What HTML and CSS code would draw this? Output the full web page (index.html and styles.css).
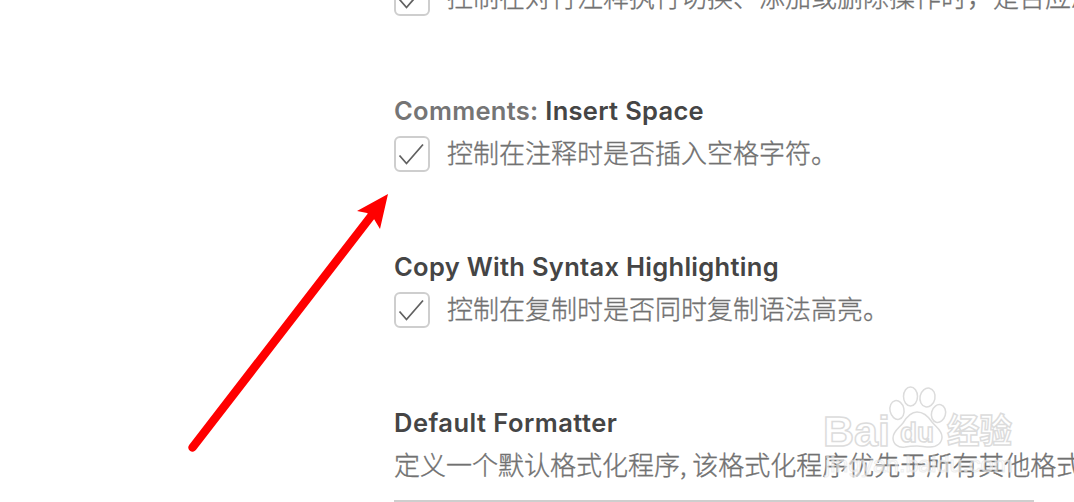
FILE: index.html
```html
<!DOCTYPE html>
<html lang="zh-CN">
<head>
<meta charset="utf-8">
<title>Settings</title>
<link rel="stylesheet" href="styles.css">
</head>
<body>
<main class="settings">
  <section class="item first">
    <div class="row">
      <span class="checkbox"><svg viewBox="0 0 32 32"><path d="M3.5 17.500 10.500 25.500 27 6.500"/></svg></span>
      <p class="desc">控制在对行注释执行切换、添加或删除操作时，是否应忽</p>
    </div>
  </section>
  <section class="item">
    <h2 class="title"><span class="category">Comments:</span> Insert Space</h2>
    <div class="row">
      <span class="checkbox"><svg viewBox="0 0 32 32"><path d="M3.5 17.500 10.500 25.500 27 6.500"/></svg></span>
      <p class="desc">控制在注释时是否插入空格字符。</p>
    </div>
  </section>
  <section class="item">
    <h2 class="title">Copy With Syntax Highlighting</h2>
    <div class="row">
      <span class="checkbox"><svg viewBox="0 0 32 32"><path d="M3.5 17.500 10.500 25.500 27 6.500"/></svg></span>
      <p class="desc">控制在复制时是否同时复制语法高亮。</p>
    </div>
  </section>
  <section class="item last">
    <h2 class="title formatter">Default Formatter</h2>
    <p class="desc wide">定义一个默认格式化程序, 该格式化程序优先于所有其他格式</p>
    <div class="select"></div>
  </section>
</main>
<svg class="arrow" viewBox="0 0 1074 502">
  <path class="shaft" d="M192.500 447.500 372 215"/>
  <path class="head" d="M388 194 357 211 367 213 374 219 380 229Z"/>
</svg>
<svg class="watermark" viewBox="814 380 260 122">
  <text class="url" x="825" y="472" textLength="188" lengthAdjust="spacingAndGlyphs">jingyan.baidu.com</text>
  <g class="outline">
    <ellipse cx="897" cy="410" rx="7" ry="9.500" transform="rotate(-12 897 410)"/>
    <ellipse cx="910.500" cy="396.500" rx="7" ry="9.500"/>
    <ellipse cx="927.500" cy="397.500" rx="7.500" ry="9.500" transform="rotate(12 927.500 397.500)"/>
    <ellipse cx="938.500" cy="413.500" rx="7" ry="9" transform="rotate(15 938.500 413.500)"/>
    <path d="M917 412c-7 0-11 6-14 11-4 5-10 8-10 15 0 6 5 10 12 9 5-1 8-1 12-1s8 1 13 1c7 0 12-4 12-10 0-7-6-10-10-15-4-6-8-10-15-10Z"/>
    <text class="logo" x="823" y="445.500" textLength="67" lengthAdjust="spacingAndGlyphs">Bai</text>
    <text class="du" x="900" y="442" textLength="34" lengthAdjust="spacingAndGlyphs">du</text>
    <text class="cjk" x="947" y="443" textLength="65" lengthAdjust="spacingAndGlyphs">经验</text>
  </g>
</svg>
</body>
</html>
```
FILE: styles.css
```css
body {
  margin: 0;
  width: 1074px;
  height: 502px;
  overflow: hidden;
  position: relative;
  background: #fff;
  font-family: Inter, "Noto Sans CJK SC", sans-serif;
}
.settings {
  display: flex;
  flex-direction: column;
  box-sizing: border-box;
  height: 502px;
  overflow: hidden;
  padding-left: 394px;
}
.item {
  height: 156px;
  flex: none;
}
.first { height: 92px; }
.first .row { margin-top: -20px; }
.last { height: 98px; }
.title {
  margin: 0 0 6px;
  font-size: 25.5px;
  line-height: 38px;
  font-weight: 600;
  letter-spacing: 0.3px;
  color: #454545;
  white-space: nowrap;
}
.formatter { letter-spacing: 0.46px; }
.category { color: #757575; }
.row {
  display: flex;
  align-items: center;
  gap: 17px;
  height: 36px;
}
.checkbox {
  box-sizing: border-box;
  flex: none;
  width: 36px;
  height: 36px;
  border: 2px solid #cecece;
  border-radius: 6px;
}
.checkbox svg { display: block; width: 32px; height: 32px; }
.checkbox path { fill: none; stroke: #616161; stroke-width: 1.8; }
.desc {
  margin: 0;
  padding-bottom: 4px;
  font: 300 26px/36px "Noto Sans CJK SC", sans-serif;
  color: #717171;
  -webkit-text-stroke: 0.35px #717171;
  white-space: nowrap;
}
.wide { margin-top: -2px; padding: 0; }
.select {
  width: 640px;
  height: 2px;
  margin-top: 18px;
  background: #cecece;
}
.arrow {
  position: absolute;
  left: 0;
  top: 0;
  width: 1074px;
  height: 502px;
}
.shaft { fill: none; stroke: #f00; stroke-width: 8.5; stroke-linecap: round; }
.head { fill: #f00; }
.watermark {
  position: absolute;
  left: 814px;
  top: 380px;
  width: 260px;
  height: 122px;
}
.outline { fill: #fff; stroke: #dcdcdc; stroke-width: 1.5; }
.logo { font: 700 43px "Liberation Sans", sans-serif; }
.du { font: 700 28px "Liberation Sans", sans-serif; }
.cjk { font: 700 34px "Noto Sans CJK SC", sans-serif; }
.url {
  font: 400 22px "Liberation Sans", sans-serif;
  fill: #fff;
  fill-opacity: 0.5;
  stroke: #e0e0e0;
  stroke-opacity: 0.55;
  stroke-width: 1;
}
```
